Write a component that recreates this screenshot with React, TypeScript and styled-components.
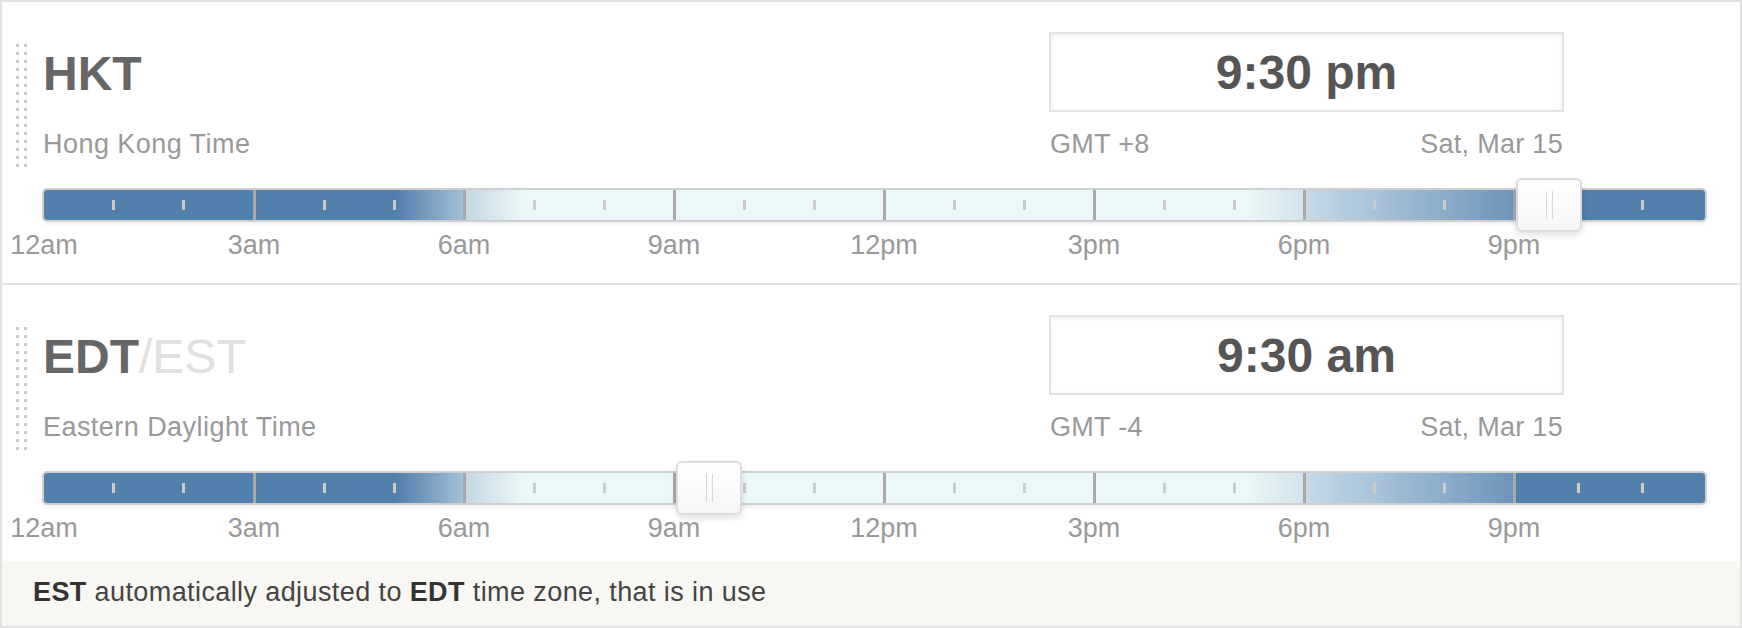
import styled, { createGlobalStyle } from "styled-components";

const GlobalStyle = createGlobalStyle`
  html, body {
    margin: 0;
    padding: 0;
    background: #fff;
  }
  body {
    font-family: "Liberation Sans", Arial, sans-serif;
  }
`;

const HOUR_PX = 70;

const LABELS = ["12am", "3am", "6am", "9am", "12pm", "3pm", "6pm", "9pm"];

const SEGMENT_BG = [
  "#5280ad",
  "linear-gradient(to right, #5280ad 68%, #a3bfd6 100%)",
  "linear-gradient(to right, #c3d7e5 0%, #ebf8f9 28%)",
  "#ebf8f9",
  "#ebf8f9",
  "linear-gradient(to right, #ebf8f9 72%, #d2e3ec 100%)",
  "linear-gradient(to right, #c6d9e6 0%, #6e95bc 100%)",
  "#5280ad",
];

type Zone = {
  abbr: string;
  alt?: string;
  name: string;
  time: string;
  offset: string;
  date: string;
  hour: number;
};

const zones: Zone[] = [
  {
    abbr: "HKT",
    name: "Hong Kong Time",
    time: "9:30 pm",
    offset: "GMT +8",
    date: "Sat, Mar 15",
    hour: 21.5,
  },
  {
    abbr: "EDT",
    alt: "EST",
    name: "Eastern Daylight Time",
    time: "9:30 am",
    offset: "GMT -4",
    date: "Sat, Mar 15",
    hour: 9.5,
  },
];

const Panel = styled.div`
  box-sizing: border-box;
  width: 1742px;
  height: 628px;
  border: 2px solid #e2e2e2;
  display: flex;
  flex-direction: column;
`;

const Row = styled.div<{ $last?: boolean }>`
  padding-top: 30px;
  padding-bottom: ${(p) => (p.$last ? "19px" : "24px")};
  border-bottom: ${(p) => (p.$last ? "none" : "2px solid #e3e3e3")};
`;

const Header = styled.div`
  display: flex;
  padding-left: 14px;
  padding-right: 176px;
`;

const Grip = styled.div`
  flex-shrink: 0;
  width: 11px;
  height: 123px;
  margin-top: 12px;
  background-image: linear-gradient(transparent 3px, #fff 3px),
    linear-gradient(to right, #cccccc 3px, transparent 3px);
  background-size: 8px 8px;
`;

const Names = styled.div`
  flex: 1;
  margin-left: 16px;
`;

const Abbr = styled.div`
  margin-top: 18px;
  font-size: 48px;
  line-height: 48px;
  font-weight: 700;
  color: #666;
`;

const AltAbbr = styled.span`
  font-weight: 400;
  color: #e0e0e0;
`;

const Caption = styled.div`
  font-size: 27px;
  line-height: 27px;
  color: #999;
`;

const ZoneName = styled(Caption)`
  margin-top: 33px;
  letter-spacing: 0.45px;
`;

const TimeColumn = styled.div`
  width: 515px;
  flex-shrink: 0;
`;

const TimeBox = styled.div`
  box-sizing: border-box;
  height: 80px;
  border: 2px solid #e3e3e3;
  box-shadow: inset 0 1px 4px rgba(0, 0, 0, 0.07);
  display: flex;
  align-items: center;
  justify-content: center;
  padding-top: 2px;
  font-size: 48px;
  line-height: 48px;
  font-weight: 700;
  color: #555;
`;

const Meta = styled(Caption)`
  margin-top: 19px;
  display: flex;
  justify-content: space-between;
  padding: 0 1px;
  letter-spacing: 0.3px;
`;

const Slider = styled.div`
  position: relative;
  width: 1665px;
  margin: 21px 0 0 40px;
`;

const Track = styled.div`
  box-sizing: border-box;
  height: 34px;
  border: 2px solid #cfcfcf;
  border-radius: 5px;
  overflow: hidden;
  display: flex;
  box-shadow: 0 2px 4px rgba(0, 0, 0, 0.07);
`;

const Segment = styled.div<{ $bg: string; $first?: boolean; $last?: boolean }>`
  box-sizing: border-box;
  flex: ${(p) => (p.$last ? "1" : "none")};
  width: ${(p) => (p.$first ? "209px" : "210px")};
  border-left: ${(p) => (p.$first ? "none" : "3px solid #a9a9a9")};
  background: ${(p) => p.$bg};
  display: flex;
  align-items: center;
  justify-content: space-evenly;
`;

const Tick = styled.div`
  width: 3px;
  height: 10px;
  background: #cbcbcb;
`;

const Handle = styled.div`
  position: absolute;
  top: -10px;
  box-sizing: border-box;
  width: 66px;
  height: 54px;
  border: 2px solid #dcdcdc;
  border-radius: 6px;
  background: linear-gradient(#ffffff, #f6f6f6);
  box-shadow: 0 3px 6px rgba(0, 0, 0, 0.12);
  display: flex;
  justify-content: center;
  align-items: center;
  gap: 5px;
`;

const HandleLine = styled.div`
  width: 1px;
  height: 28px;
  background: #d6d6d6;
`;

const Labels = styled.div`
  display: flex;
  margin-top: 10px;
  padding-left: 42px;
`;

const Label = styled.div`
  width: 210px;
  flex-shrink: 0;
  font-size: 27px;
  line-height: 27px;
  color: #999;

  span {
    display: inline-block;
    transform: translateX(-50%);
  }
`;

const Footer = styled.div`
  flex: 1;
  background: #f9f7f3;
  padding: 18px 0 0 31px;
  font-size: 27px;
  line-height: 27px;
  letter-spacing: 0.4px;
  color: #444;

  b {
    color: #333;
  }
`;

const ZoneRow = ({ zone, last }: { zone: Zone; last?: boolean }) => {
  // thumb centred on the current hour, 66px wide
  const handleLeft = 2 + zone.hour * HOUR_PX - 33;
  return (
    <Row $last={last}>
      <Header>
        <Grip />
        <Names>
          <Abbr>
            {zone.abbr}
            {zone.alt && <AltAbbr>/{zone.alt}</AltAbbr>}
          </Abbr>
          <ZoneName>{zone.name}</ZoneName>
        </Names>
        <TimeColumn>
          <TimeBox>{zone.time}</TimeBox>
          <Meta>
            <span>{zone.offset}</span>
            <span>{zone.date}</span>
          </Meta>
        </TimeColumn>
      </Header>
      <Slider>
        <Track>
          {SEGMENT_BG.map((bg, i) => (
            <Segment
              key={i}
              $bg={bg}
              $first={i === 0}
              $last={i === SEGMENT_BG.length - 1}
            >
              <Tick />
              <Tick />
            </Segment>
          ))}
        </Track>
        <Handle style={{ left: handleLeft }}>
          <HandleLine />
          <HandleLine />
        </Handle>
      </Slider>
      <Labels>
        {LABELS.map((l) => (
          <Label key={l}>
            <span>{l}</span>
          </Label>
        ))}
      </Labels>
    </Row>
  );
};

export default function App() {
  return (
    <>
      <GlobalStyle />
      <Panel>
        {zones.map((z, i) => (
          <ZoneRow key={z.abbr} zone={z} last={i === zones.length - 1} />
        ))}
        <Footer>
          <b>EST</b> automatically adjusted to <b>EDT</b> time zone, that is in
          use
        </Footer>
      </Panel>
    </>
  );
}
